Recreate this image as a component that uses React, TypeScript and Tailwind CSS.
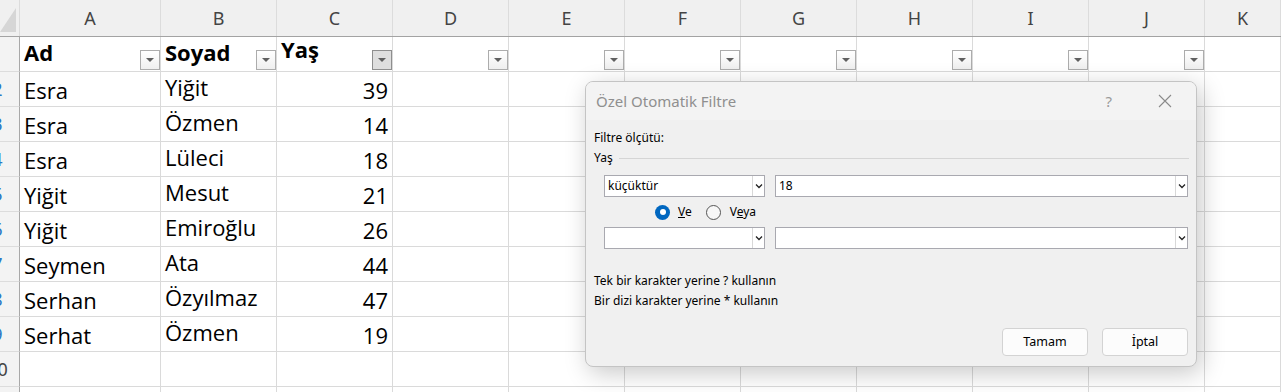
import React from 'react';

const COLS = ['A', 'B', 'C', 'D', 'E', 'F', 'G', 'H', 'I', 'J', 'K'];
const WIDTHS = [141, 116, 116, 116, 116, 116, 116, 116, 116, 116, 76];

const ROWS: [string, string, number][] = [
  ['Esra', 'Yiğit', 39],
  ['Esra', 'Özmen', 14],
  ['Esra', 'Lüleci', 18],
  ['Yiğit', 'Mesut', 21],
  ['Yiğit', 'Emiroğlu', 26],
  ['Seymen', 'Ata', 44],
  ['Serhan', 'Özyılmaz', 47],
  ['Serhat', 'Özmen', 19],
];

const cellFont = { fontFamily: '"Open Sans", "Noto Sans", sans-serif' };
const uiFont = { fontFamily: '"Noto Sans", "Open Sans", sans-serif' };

function FilterButton({ active }: { active?: boolean }) {
  return (
    <div
      className={
        'w-[20px] h-[20px] border flex items-center justify-center shrink-0 ' +
        (active ? 'border-[#8e8e8e] bg-[#dedede]' : 'border-[#acacac] bg-gradient-to-b from-white to-[#efefef]')
      }
    >
      <div className="w-0 h-0 border-l-[4px] border-r-[4px] border-t-[4px] border-l-transparent border-r-transparent border-t-[#5f5f5f]" />
    </div>
  );
}

function RowHeader({ n, h, tone }: { n: number; h: number; tone: string }) {
  return (
    <div
      className="w-[20px] shrink-0 overflow-hidden flex justify-end items-center bg-[#f3f3f3] border-b border-[#dcdcdc] border-r border-r-[#a8a8a8]"
      style={{ height: h }}
    >
      <div className={'w-[43px] shrink-0 text-center text-[18px] ' + tone} style={uiFont}>
        {n}
      </div>
    </div>
  );
}

function Cell({ i, children, className = '' }: { i: number; children?: React.ReactNode; className?: string }) {
  return (
    <div
      className={'shrink-0 h-full border-r border-b border-[#dadada] flex items-end overflow-hidden ' + className}
      style={{ width: WIDTHS[i] }}
    >
      {children}
    </div>
  );
}

function ComboBox({ text, wide }: { text?: string; wide?: boolean }) {
  return (
    <div
      className={
        'h-[22px] bg-white border border-[#a9a9b0] flex items-stretch ' + (wide ? 'w-[413px]' : 'w-[161px]')
      }
    >
      <div className="flex-1 flex items-center pl-[3px] text-[12px] text-black" style={uiFont}>
        {text}
      </div>
      <div className="w-[12px] border-l border-[#d8d8d8] flex items-center justify-center">
        <svg width="8" height="6" viewBox="0 0 8 6">
          <path d="M1 1.5 L4 4.5 L7 1.5" fill="none" stroke="#222" strokeWidth="1.3" />
        </svg>
      </div>
    </div>
  );
}

function Dialog() {
  return (
    <div className="absolute left-[585px] top-[81px] w-[612px] h-[286px] rounded-[8px] border border-[#c4c4c4] bg-[#f0f0f0] shadow-[4px_6px_24px_rgba(0,0,0,0.22)] overflow-hidden flex flex-col">
      <div className="h-[38px] bg-[#f3f3f3] flex items-center pl-[10px] pr-[20px] shrink-0">
        <span className="text-[15px] text-[#8f8f8f] flex-1" style={uiFont}>
          Özel Otomatik Filtre
        </span>
        <span className="text-[15px] text-[#9a9a9a] mr-[46px]" style={uiFont}>
          ?
        </span>
        <svg width="14" height="14" viewBox="0 0 14 14" className="mr-[4px]">
          <path d="M1 1 L13 13 M13 1 L1 13" stroke="#8a8a8a" strokeWidth="1.1" />
        </svg>
      </div>
      <div className="flex-1 flex flex-col pl-[8px] pr-[7px] text-[12px] text-black" style={uiFont}>
        <div className="mt-[10px] h-[16px] leading-[16px]">Filtre ölçütü:</div>
        <div className="mt-[4px] flex items-center h-[16px]">
          <span className="leading-[16px]">Yaş</span>
          <div className="flex-1 ml-[6px] h-px bg-[#d5d5d5]" />
        </div>
        <div className="mt-[9px] flex gap-[10px] pl-[10px]">
          <ComboBox text="küçüktür" />
          <ComboBox text="18" wide />
        </div>
        <div className="h-[30px] flex items-center pl-[61px]">
          <div className="w-[15px] h-[15px] rounded-full bg-[#0067c0] flex items-center justify-center">
            <div className="w-[6px] h-[6px] rounded-full bg-white" />
          </div>
          <span className="ml-[8px]">
            <span className="underline">V</span>e
          </span>
          <div className="ml-[14px] w-[15px] h-[15px] rounded-full border border-[#555] bg-[#f7f7f7]" />
          <span className="ml-[9px]">
            V<span className="underline">e</span>ya
          </span>
        </div>
        <div className="flex gap-[10px] pl-[10px]">
          <ComboBox />
          <ComboBox wide />
        </div>
        <div className="mt-[22px] h-[20px] leading-[20px]">Tek bir karakter yerine ? kullanın</div>
        <div className="h-[20px] leading-[20px]">Bir dizi karakter yerine * kullanın</div>
        <div className="mt-auto mb-[10px] flex justify-end gap-[14px] pr-[1px]">
          <button className="w-[86px] h-[28px] rounded-[4px] border border-[#d3d3d3] bg-[#fcfcfc] text-[12.5px] text-black">
            Tamam
          </button>
          <button className="w-[86px] h-[28px] rounded-[4px] border border-[#d3d3d3] bg-[#fcfcfc] text-[12.5px] text-black">
            İptal
          </button>
        </div>
      </div>
    </div>
  );
}

export default function App() {
  return (
    <div className="relative w-[1281px] h-[392px] overflow-hidden bg-white">
      {/* column letters */}
      <div className="flex h-[37px] bg-[#f0f0f0] border-b border-[#a3a3a3]">
        <div className="w-[20px] shrink-0 relative border-r border-[#dcdcdc]">
          <div className="absolute left-0 bottom-[4px] w-0 h-0 border-l-[16px] border-l-transparent border-b-[24px] border-b-[#d6d6d6]" />
        </div>
        {COLS.map((c, i) => (
          <div
            key={c}
            className="shrink-0 flex items-center justify-center text-[18px] text-[#444] border-r border-[#dcdcdc]"
            style={{ width: WIDTHS[i], ...uiFont }}
          >
            {c}
          </div>
        ))}
      </div>

      {/* header row */}
      <div className="flex h-[35px]">
        <RowHeader n={1} h={35} tone="text-[#444]" />
        {COLS.map((c, i) => {
          const label = ['Ad', 'Soyad', 'Yaş'][i];
          return (
            <Cell key={c} i={i} className="justify-between pb-[1px]">
              {label ? (
                <span
                  className={'pl-[4px] text-[22px] font-bold text-black leading-none ' + (i === 2 ? 'mb-[10px]' : 'mb-[7px]')}
                  style={cellFont}
                >
                  {label}
                </span>
              ) : (
                <span />
              )}
              {i < 10 && <FilterButton active={i === 2} />}
            </Cell>
          );
        })}
      </div>

      {/* data rows */}
      {ROWS.map(([a, b, n], r) => (
        <div key={r} className="flex h-[35px]">
          <RowHeader n={r + 2} h={35} tone="text-[#2a78c5]" />
          {COLS.map((c, i) => (
            <Cell key={c} i={i} className={i === 2 ? 'justify-end' : ''}>
              {i === 0 && (
                <span className="pl-[4px] mb-[5px] text-[22px] leading-none text-black" style={cellFont}>
                  {a}
                </span>
              )}
              {i === 1 && (
                <span className="pl-[4px] mb-[8px] text-[22px] leading-none text-black" style={cellFont}>
                  {b}
                </span>
              )}
              {i === 2 && (
                <span className="pr-[4px] mb-[5px] text-[22px] leading-none text-black" style={cellFont}>
                  {n}
                </span>
              )}
            </Cell>
          ))}
        </div>
      ))}

      {/* empty rows */}
      {[10, 11].map((n) => (
        <div key={n} className="flex h-[35px]">
          <RowHeader n={n} h={35} tone="text-[#444]" />
          {COLS.map((c, i) => (
            <Cell key={c} i={i} />
          ))}
        </div>
      ))}

      <Dialog />
    </div>
  );
}
